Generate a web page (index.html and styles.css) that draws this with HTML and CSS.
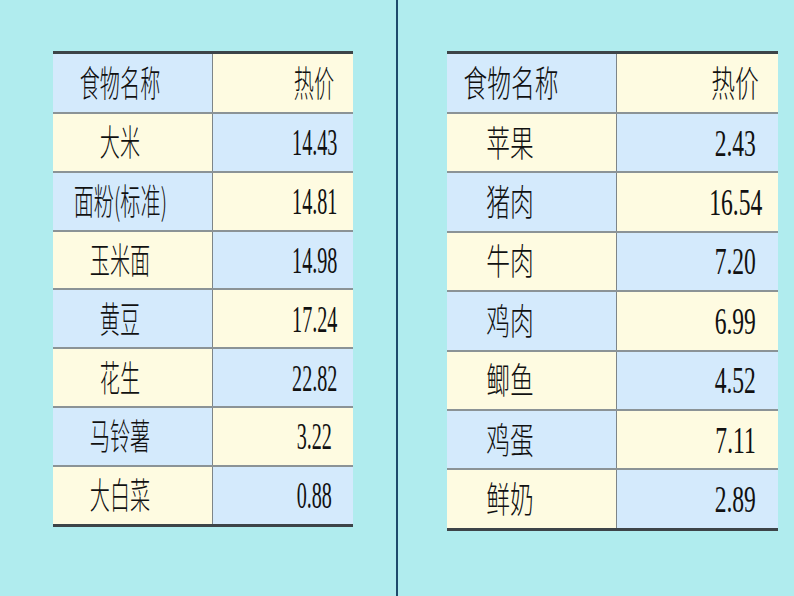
FILE: index.html
```html
<!DOCTYPE html>
<html lang="zh">
<head>
<meta charset="utf-8">
<link rel="stylesheet" href="styles.css">
</head>
<body>
<div class="slide">
  <div class="tbl tbl-left">
    <div class="row"><div class="cell name blue"><span>食物名称</span></div><div class="cell val cream"><span class="cjk">热价</span></div></div>
    <div class="row"><div class="cell name cream"><span>大米</span></div><div class="cell val blue"><span>14.43</span></div></div>
    <div class="row"><div class="cell name blue"><span>面粉(标准)</span></div><div class="cell val cream"><span>14.81</span></div></div>
    <div class="row"><div class="cell name cream"><span>玉米面</span></div><div class="cell val blue"><span>14.98</span></div></div>
    <div class="row"><div class="cell name blue"><span>黄豆</span></div><div class="cell val cream"><span>17.24</span></div></div>
    <div class="row"><div class="cell name cream"><span>花生</span></div><div class="cell val blue"><span>22.82</span></div></div>
    <div class="row"><div class="cell name blue"><span>马铃薯</span></div><div class="cell val cream"><span>3.22</span></div></div>
    <div class="row"><div class="cell name cream"><span>大白菜</span></div><div class="cell val blue"><span>0.88</span></div></div>
  </div>
  <div class="divider"></div>
  <div class="tbl tbl-right">
    <div class="row"><div class="cell name blue"><span>食物名称</span></div><div class="cell val cream"><span class="cjk">热价</span></div></div>
    <div class="row"><div class="cell name cream"><span>苹果</span></div><div class="cell val blue"><span>2.43</span></div></div>
    <div class="row"><div class="cell name blue"><span>猪肉</span></div><div class="cell val cream"><span>16.54</span></div></div>
    <div class="row"><div class="cell name cream"><span>牛肉</span></div><div class="cell val blue"><span>7.20</span></div></div>
    <div class="row"><div class="cell name blue"><span>鸡肉</span></div><div class="cell val cream"><span>6.99</span></div></div>
    <div class="row"><div class="cell name cream"><span>鲫鱼</span></div><div class="cell val blue"><span>4.52</span></div></div>
    <div class="row"><div class="cell name blue"><span>鸡蛋</span></div><div class="cell val cream"><span>7.11</span></div></div>
    <div class="row"><div class="cell name cream"><span>鲜奶</span></div><div class="cell val blue"><span>2.89</span></div></div>
  </div>
</div>
</body>
</html>
```
FILE: styles.css
```css
html, body {
  margin: 0;
  padding: 0;
}
body {
  background: #b0ecee;
  width: 794px;
  height: 596px;
  overflow: hidden;
}
.slide {
  display: flex;
  align-items: flex-start;
  height: 596px;
}
.divider {
  align-self: stretch;
  width: 2px;
  background: #1d4a6b;
  margin-left: 43px;
  margin-right: 49px;
}
.tbl {
  margin-top: 51px;
  border-top: 3px solid #3d4448;
  border-bottom: 3px solid #3d4448;
  display: flex;
  flex-direction: column;
}
.tbl-left {
  margin-left: 53px;
  width: 300px;
}
.tbl-right {
  width: 331px;
}
.row {
  display: flex;
  height: 58px;
}
.row + .row {
  border-top: 2px solid #8b9396;
  height: 56.8px;
}
.tbl-right .row + .row {
  height: 57.4px;
}
.cell {
  display: flex;
  align-items: center;
  justify-content: center;
  box-sizing: border-box;
  color: #111;
  white-space: nowrap;
  line-height: 1;
}
.blue { background: #d4eafc; }
.cream { background: #fefbe1; }
.cell span {
  display: inline-block;
}
.name {
  font-family: "Noto Sans CJK SC", sans-serif;
  font-size: 36px;
  font-weight: 300;
  padding-bottom: 4px;
}
.val {
  font-family: "Liberation Serif", "Times New Roman", serif;
  font-size: 38px;
  border-left: 1px solid #7d8588;
}
.val .cjk {
  font-family: "Noto Sans CJK SC", sans-serif;
  font-size: 36px;
  font-weight: 300;
  position: relative;
  top: -2px;
}
.tbl-left .name { width: 159px; padding-right: 25px; }
.tbl-left .val { width: 141px; padding-left: 63px; }
.tbl-right .name { width: 169px; padding-right: 42px; }
.tbl-right .val { width: 162px; padding-left: 76px; }
.tbl-left .name span { transform: scaleX(0.56); }
.tbl-right .name span { transform: scaleX(0.66); }
.tbl-left .val span { transform: scaleX(0.53); }
.tbl-right .val span { transform: scaleX(0.62); }
.tbl-left .val .cjk { transform: scaleX(0.56); }
.tbl-right .val .cjk { transform: scaleX(0.66); }
```
